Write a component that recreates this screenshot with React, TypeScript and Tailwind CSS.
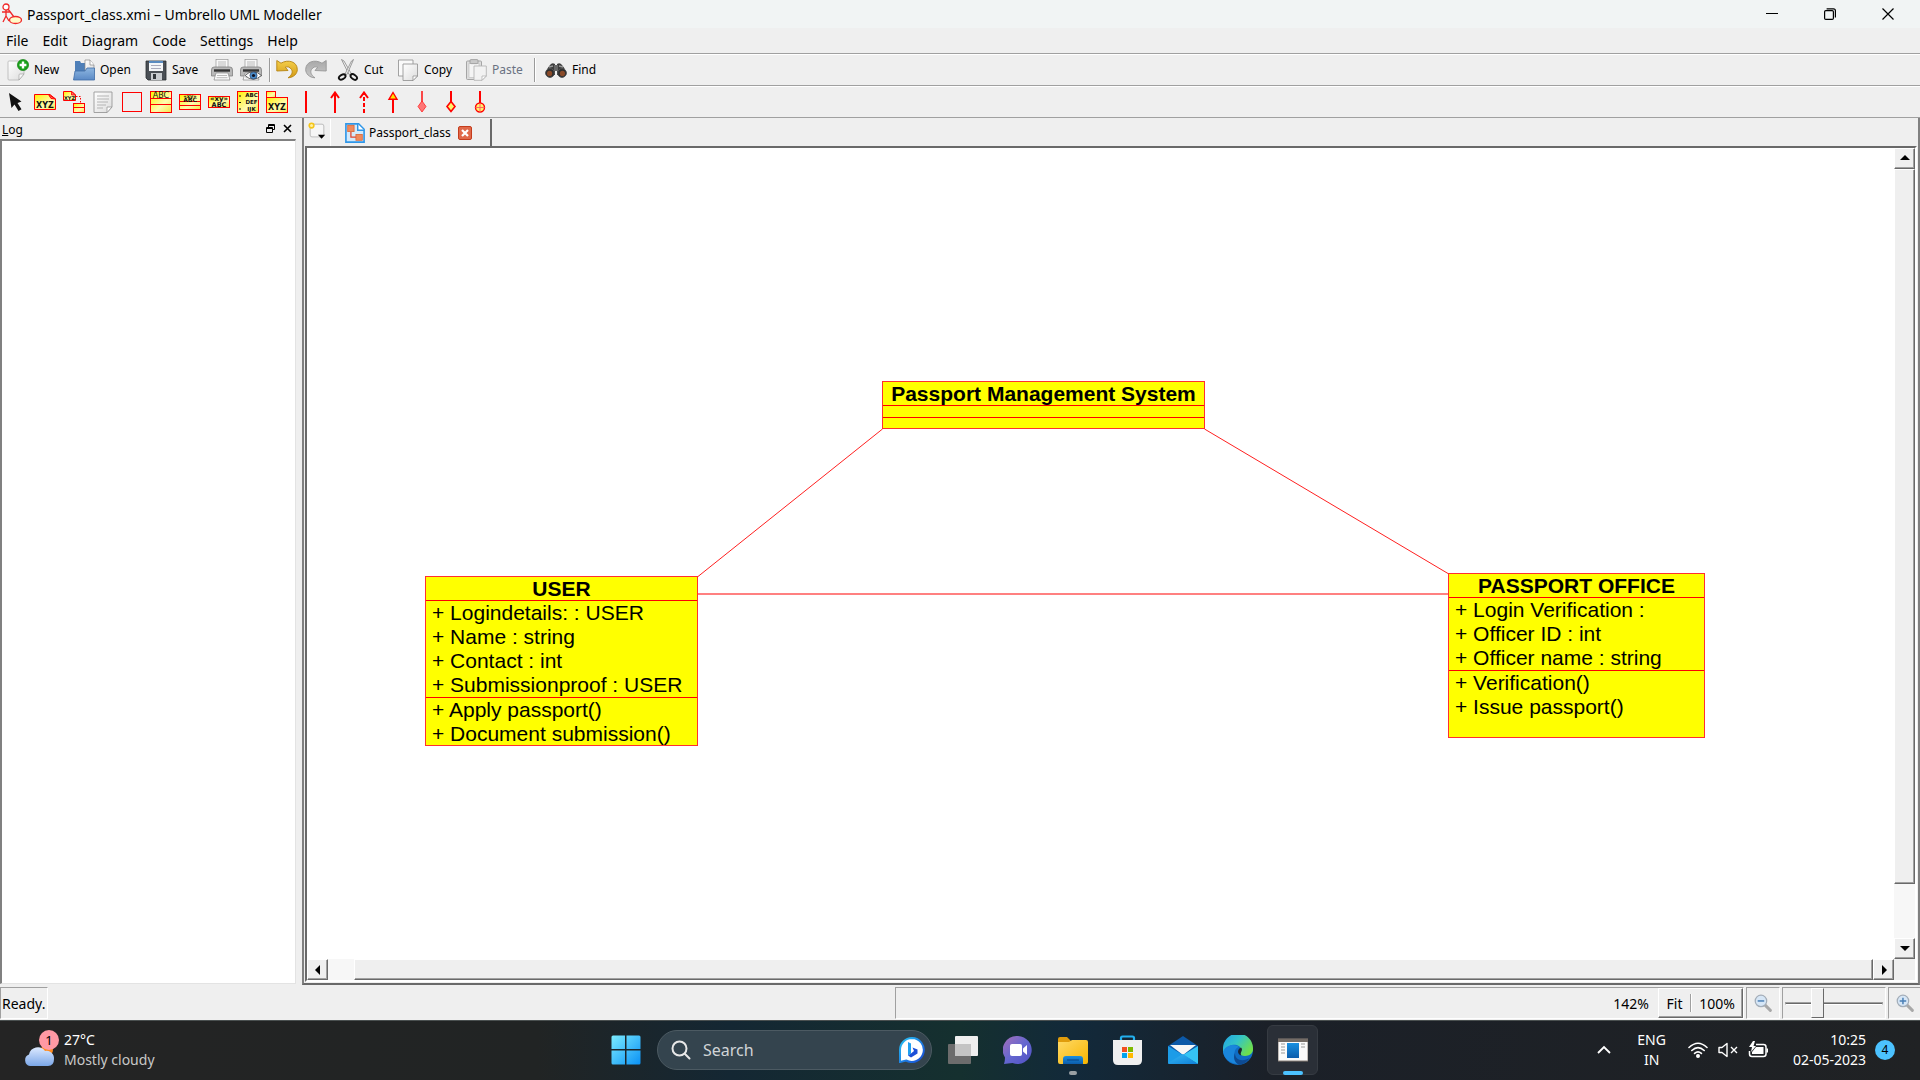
import React from "react";

type Kids = { children?: React.ReactNode };

function Icon({ size = 22, label, children }: Kids & { size?: number; label?: string }) {
  return (
    <svg width={size} height={size} viewBox="0 0 22 22" fill="none" className="shrink-0" aria-label={label} aria-hidden={!label}>
      {children}
    </svg>
  );
}

function Gradients() {
  return (
    <svg width="0" height="0" className="absolute" aria-hidden="true">
      <defs>
        <linearGradient id="paper" x1="0" y1="0" x2="1" y2="1">
          <stop offset="0" stopColor="#ffffff" />
          <stop offset="1" stopColor="#dcdcdc" />
        </linearGradient>
        <linearGradient id="yellow" x1="0" y1="0" x2="1" y2="1">
          <stop offset="0" stopColor="#fff200" />
          <stop offset="0.6" stopColor="#fffbb0" />
          <stop offset="1" stopColor="#f4e84a" />
        </linearGradient>
        <linearGradient id="folderBlue" x1="0" y1="0" x2="0" y2="1">
          <stop offset="0" stopColor="#8db6e0" />
          <stop offset="1" stopColor="#5b8ac6" />
        </linearGradient>
        <linearGradient id="gold" x1="0" y1="0" x2="0" y2="1">
          <stop offset="0" stopColor="#f5cf4a" />
          <stop offset="1" stopColor="#d39a16" />
        </linearGradient>
        <linearGradient id="silver" x1="0" y1="0" x2="0" y2="1">
          <stop offset="0" stopColor="#a8a8a8" />
          <stop offset="1" stopColor="#c8c8c8" />
        </linearGradient>
        <linearGradient id="win" x1="0" y1="0" x2="1" y2="1">
          <stop offset="0" stopColor="#7cecff" />
          <stop offset="1" stopColor="#0a91f5" />
        </linearGradient>
        <linearGradient id="bing" x1="0" y1="0" x2="1" y2="1">
          <stop offset="0" stopColor="#27c4f5" />
          <stop offset="1" stopColor="#1747d4" />
        </linearGradient>
        <linearGradient id="chat" x1="0" y1="0" x2="1" y2="1">
          <stop offset="0" stopColor="#a76fb8" />
          <stop offset="0.5" stopColor="#6567d0" />
          <stop offset="1" stopColor="#5050c4" />
        </linearGradient>
        <linearGradient id="folder" x1="0" y1="0" x2="1" y2="1">
          <stop offset="0" stopColor="#ffd966" />
          <stop offset="1" stopColor="#f7b500" />
        </linearGradient>
        <linearGradient id="blue" x1="0" y1="0" x2="0" y2="1">
          <stop offset="0" stopColor="#1a90e0" />
          <stop offset="1" stopColor="#0c5cab" />
        </linearGradient>
        <linearGradient id="mail" x1="0" y1="0" x2="1" y2="1">
          <stop offset="0" stopColor="#35b9f4" />
          <stop offset="1" stopColor="#0f7fd8" />
        </linearGradient>
        <linearGradient id="edgeTop" x1="0" y1="0" x2="1" y2="0.6">
          <stop offset="0" stopColor="#1f9fe8" />
          <stop offset="0.5" stopColor="#33c4c8" />
          <stop offset="1" stopColor="#6fe04a" />
        </linearGradient>
        <linearGradient id="cloud" x1="0" y1="0" x2="0" y2="1">
          <stop offset="0" stopColor="#dce9ff" />
          <stop offset="1" stopColor="#7ba7e8" />
        </linearGradient>
      </defs>
    </svg>
  );
}

/* ---------- action icons ---------- */

const NewIcon = () => (
  <Icon>
    <path d="M1 3 Q1 2 2 2 H17 V15 L12 21 H2 Q1 21 1 20Z" fill="url(#paper)" stroke="#b5b5b5" strokeWidth="0.8" />
    <path d="M17 15 L12 21 V16 Q12 15 13 15Z" fill="#f8f8f8" stroke="#999" strokeWidth="0.6" />
    <circle cx="16" cy="6" r="5.6" fill="#1aa01a" stroke="#0c7a0c" strokeWidth="0.6" />
    <path d="M16 2.6V9.4M12.6 6H19.4" stroke="#fff" strokeWidth="2.4" />
  </Icon>
);
const OpenIcon = () => (
  <Icon>
    <path d="M2 2 H7 L8 4 H20 V18 H2Z" fill="#4e7fb8" />
    <path d="M12 1 H17 L21 6 V13 H12Z" fill="url(#paper)" stroke="#888" strokeWidth="0.7" />
    <path d="M17 1 V6 H21" fill="#fff" stroke="#888" strokeWidth="0.7" />
    <path d="M0.5 21 L2 12 H12 L14 9 H21.5 V21Z" fill="url(#folderBlue)" stroke="#3f6ca6" strokeWidth="0.8" />
  </Icon>
);
const SaveIcon = () => (
  <Icon>
    <path d="M1 2 H21 V21 H3 L1 19Z" fill="#4a4f55" stroke="#2a2d30" strokeWidth="0.8" />
    <rect x="4" y="2" width="14" height="10" fill="#f4f6f8" />
    <path d="M4 3H18" stroke="#5a8bc0" strokeWidth="2" />
    <path d="M6 6.5H16M6 9.5H16" stroke="#aab" />
    <rect x="6" y="14" width="11" height="7" fill="#c9ccd0" />
    <rect x="8" y="15" width="3" height="5" fill="#33373b" />
  </Icon>
);
const PrintBody = () => (
  <>
    <rect x="5" y="0.5" width="12" height="10" fill="#f8f8f8" stroke="#999" strokeWidth="0.7" />
    <path d="M7 3H15M7 5H15M7 7H15" stroke="#aaa" strokeWidth="0.8" />
    <path d="M3 8 H19 Q21.5 8 21.5 11 V17 H0.5 V11 Q0.5 8 3 8Z" fill="#b8b8b8" stroke="#777" strokeWidth="0.7" />
    <path d="M3 11.5H19" stroke="#333" strokeWidth="2.4" />
    <path d="M5 14 H17 L19 21 H3Z" fill="#fafafa" stroke="#888" strokeWidth="0.7" />
    <path d="M6 16.5H16M5.5 18.7H16.5" stroke="#aaa" strokeWidth="0.8" />
  </>
);
const PrintIcon = () => <Icon><PrintBody /></Icon>;
const PreviewIcon = () => (
  <Icon>
    <PrintBody />
    <path d="M5 16.5 Q13 9 21.5 16.5 Q13 24 5 16.5Z" fill="#fff" stroke="#444" strokeWidth="0.8" />
    <circle cx="13.5" cy="16.5" r="3.6" fill="#4a8cc8" stroke="#235" strokeWidth="0.6" />
    <circle cx="13.5" cy="16.5" r="1.6" fill="#112" />
  </Icon>
);
const UndoShape = ({ fill, edge }: { fill: string; edge: string }) => (
  <path
    d="M0.8 1.5 L5 4.2 C12 0 21.3 2.5 21.3 10.5 C21.3 14.5 18 18.5 12 18.8 C16 16 17 13 15.5 10.5 C14 8 11.5 7.3 9.3 8.2 L12 11.5 L0.8 12Z"
    fill={fill} stroke={edge} strokeWidth="0.9" strokeLinejoin="round"
  />
);
const UndoIcon = () => <Icon><UndoShape fill="url(#gold)" edge="#b58312" /></Icon>;
const RedoIcon = () => (
  <Icon><g transform="translate(22 0) scale(-1 1)"><UndoShape fill="url(#silver)" edge="#969696" /></g></Icon>
);
const CutIcon = () => (
  <Icon>
    <path d="M4.5 0.5 L7 2 L14.5 15 L12 15.5Z" fill="#eee" stroke="#888" strokeWidth="0.8" />
    <path d="M16.5 0.5 L14.5 2 L8 15 L10 15.5Z" fill="#eee" stroke="#888" strokeWidth="0.8" />
    <ellipse cx="5.2" cy="18" rx="3.6" ry="2.2" transform="rotate(-30 5.2 18)" stroke="#111" strokeWidth="1.9" />
    <ellipse cx="16.8" cy="18" rx="3.6" ry="2.2" transform="rotate(35 16.8 18)" stroke="#111" strokeWidth="1.9" />
  </Icon>
);
const CopyIcon = () => (
  <Icon>
    <path d="M1.5 1 H16 V17 H1.5Z" fill="#fafafa" stroke="#999" strokeWidth="0.9" />
    <path d="M6 5 H20.5 V17 L16 21.5 H6Z" fill="url(#paper)" stroke="#999" strokeWidth="0.9" />
    <path d="M20.5 17 H16 V21.5Z" fill="#fff" stroke="#888" strokeWidth="0.7" />
  </Icon>
);
const PasteIcon = () => (
  <Icon>
    <rect x="1.5" y="2" width="15" height="18.5" rx="1" fill="#ddd" stroke="#a5a5a5" />
    <rect x="4" y="4.5" width="10" height="14" fill="#f4f4f4" stroke="#bbb" strokeWidth="0.6" />
    <rect x="5" y="0.6" width="8" height="4" rx="1" fill="#c9c9c9" stroke="#999" strokeWidth="0.8" />
    <path d="M9 7 H21.3 V17 L17 21.3 H9Z" fill="#f2f2f2" stroke="#b5b5b5" strokeWidth="0.9" />
    <path d="M21.3 17 H17 V21.3Z" fill="#fff" stroke="#aaa" strokeWidth="0.7" />
  </Icon>
);
const FindIcon = () => (
  <Icon>
    <path d="M5 6 Q7 3 10 5 V16 H1 Q0 12 5 6Z" fill="#3c3c3c" />
    <path d="M17 6 Q15 3 12 5 V16 H21 Q22 12 17 6Z" fill="#3c3c3c" />
    <rect x="9" y="6" width="4" height="6" fill="#666" />
    <path d="M4 8L8 7M14 7L18 8" stroke="#999" strokeWidth="1.3" />
    <circle cx="5" cy="14" r="4.4" fill="#2d2d2d" stroke="#555" />
    <circle cx="17" cy="14" r="4.4" fill="#2d2d2d" stroke="#555" />
    <circle cx="4.6" cy="14.4" r="2.6" fill="#8a4a28" />
    <circle cx="17.4" cy="14.4" r="2.6" fill="#8a4a28" />
  </Icon>
);

/* ---------- diagram tool icons ---------- */

const Tiny = ({ x, y, s, children }: { x: number; y: number; s: number; children: string }) => (
  <text x={x} y={y} fontSize={s} fontWeight="700" textAnchor="middle" fill="#111" fontFamily="'DejaVu Sans', sans-serif">
    {children}
  </text>
);

const tools: { name: string; icon: React.ReactNode }[] = [
  {
    name: "Select",
    icon: <path d="M4 2 L6.5 17 L9.5 13.5 L13.5 20 L16.5 18.3 L12.5 12 L16.5 10.5Z" fill="#111" />,
  },
  {
    name: "Object",
    icon: (
      <>
        <path d="M0.5 3.5 H16 L21.5 8 V18.5 H0.5Z" fill="url(#yellow)" stroke="#f00" />
        <path d="M14.5 3.5 L17 7.5 L21.5 8Z" fill="#f66" stroke="#f00" />
        <Tiny x={11} y={17} s={8}>XYZ</Tiny>
      </>
    ),
  },
  {
    name: "Message",
    icon: (
      <>
        <path d="M0.5 0.5 H9 L12.5 4 V9.5 H0.5Z" fill="url(#yellow)" stroke="#f00" />
        <path d="M8.5 0.5V4H12.5Z" fill="#f66" stroke="#f00" strokeWidth="0.8" />
        <Tiny x={6.5} y={8.5} s={5}>XYZ</Tiny>
        <path d="M13 5.5H17.5V12" stroke="#f00" strokeDasharray="1.5 1.5" />
        <rect x="10.5" y="12.5" width="11" height="9" fill="url(#yellow)" stroke="#f00" />
        <path d="M10.5 16.5H21.5" stroke="#f00" />
      </>
    ),
  },
  {
    name: "Note",
    icon: (
      <>
        <path d="M2 1 H20 V16 L15 21.5 H2Z" fill="url(#paper)" stroke="#999" strokeWidth="0.9" />
        <path d="M5 5H17M5 8H17M5 11H16M5 14H14M5 17H11" stroke="#b4b4b4" />
        <path d="M20 16 H15 V21.5Z" fill="#fff" stroke="#999" strokeWidth="0.8" />
      </>
    ),
  },
  { name: "Box", icon: <rect x="1.5" y="1.5" width="19" height="19" stroke="#f00" /> },
  {
    name: "Class",
    icon: (
      <>
        <rect x="0.5" y="0.5" width="21" height="21" fill="url(#yellow)" stroke="#f00" />
        <path d="M1 7.5H21M1 13.5H21" stroke="#f00" />
        <text x="11" y="6.7" fontSize="8" textAnchor="middle" fill="#111" fontFamily="'DejaVu Sans', sans-serif">ABC</text>
      </>
    ),
  },
  {
    name: "Interface",
    icon: (
      <>
        <rect x="0.5" y="3.5" width="21" height="15" fill="url(#yellow)" stroke="#f00" />
        <path d="M1 10.5H21M1 14.5H21" stroke="#f00" />
        <Tiny x={11} y={7} s={5}>«xy»</Tiny>
        <Tiny x={11} y={10.5} s={6}>ABC</Tiny>
      </>
    ),
  },
  {
    name: "Datatype",
    icon: (
      <>
        <rect x="0.5" y="5.5" width="21" height="11" fill="url(#yellow)" stroke="#f00" />
        <Tiny x={11} y={10} s={7}>«xy»</Tiny>
        <Tiny x={11} y={15.5} s={6.5}>ABC</Tiny>
      </>
    ),
  },
  {
    name: "Enum",
    icon: (
      <>
        <rect x="0.5" y="0.5" width="21" height="21" fill="url(#yellow)" stroke="#f00" />
        <Tiny x={14.5} y={6} s={5.5}>ABC</Tiny>
        <Tiny x={14.5} y={13} s={5.5}>DEF</Tiny>
        <Tiny x={14.5} y={19.5} s={5.5}>IJK</Tiny>
        <path d="M2 5H4M2 11.5H4M2 18H4" stroke="#111" />
      </>
    ),
  },
  {
    name: "Package",
    icon: (
      <>
        <rect x="0.5" y="0.5" width="9" height="6" fill="url(#yellow)" stroke="#f00" />
        <rect x="0.5" y="6.5" width="21" height="15" fill="url(#yellow)" stroke="#f00" />
        <Tiny x={11} y={18.5} s={8}>XYZ</Tiny>
      </>
    ),
  },
  { name: "Association", icon: <path d="M11 0V22" stroke="#f00" strokeWidth="2" /> },
  { name: "Directional association", icon: <path d="M11 22V2M7 7L11 1.5L15 7" stroke="#f00" strokeWidth="2" /> },
  {
    name: "Dependency",
    icon: (
      <>
        <path d="M11 22V2" stroke="#f00" strokeWidth="2" strokeDasharray="4 2" />
        <path d="M7 7L11 1.5L15 7" stroke="#f00" strokeWidth="2" />
      </>
    ),
  },
  {
    name: "Generalization",
    icon: (
      <>
        <path d="M11 22V8" stroke="#f00" strokeWidth="2" />
        <path d="M11 1.5L15 8.2H7Z" fill="#ffe600" stroke="#f00" strokeWidth="1.4" />
      </>
    ),
  },
  {
    name: "Composition",
    icon: (
      <>
        <path d="M11 0V11" stroke="#f00" strokeWidth="1.4" />
        <path d="M11 10L15 15.5L11 21L7 15.5Z" fill="#f77" stroke="#f22" strokeWidth="0.8" />
      </>
    ),
  },
  {
    name: "Aggregation",
    icon: (
      <>
        <path d="M11 0V11" stroke="#f00" strokeWidth="2" />
        <path d="M11 10.5L15 15.5L11 20.5L7 15.5Z" fill="#fff36b" stroke="#f00" strokeWidth="1.6" />
      </>
    ),
  },
  {
    name: "Containment",
    icon: (
      <>
        <path d="M11 0V12" stroke="#f00" strokeWidth="2" />
        <circle cx="11" cy="16.5" r="4.5" fill="#fff36b" stroke="#f00" strokeWidth="1.4" />
        <path d="M11 12V21M6.5 16.5H15.5" stroke="#f66" />
      </>
    ),
  },
];

/* ---------- shared controls ---------- */

function ToolButton({ icon, label, width, disabled }: { icon: React.ReactNode; label: string; width: string; disabled?: boolean }) {
  return (
    <button disabled={disabled} className={`flex h-full items-center gap-[5px] text-[12px] leading-4 ${width} ${disabled ? "text-gray-500" : "text-black"}`}>
      {icon}
      {label}
    </button>
  );
}

function ToolSeparator() {
  return <div className="h-6 w-[2px] border-l border-[#9a9a9a] bg-white" />;
}

const raised = "border border-t-white border-l-white border-r-[#696969] border-b-[#696969] bg-[#efefef] shadow-[inset_-1px_-1px_0_#a0a0a0]";
const sunken = "border border-t-[#a0a0a0] border-l-[#a0a0a0] border-r-white border-b-white";

function ScrollButton({ dir }: { dir: "up" | "down" | "left" | "right" }) {
  const paths = { up: "M5 1L10 6H0Z", down: "M0 2H10L5 7Z", left: "M7 0V10L2 5Z", right: "M3 0V10L8 5Z" };
  return (
    <button aria-label={`Scroll ${dir}`} className={`flex size-[21px] shrink-0 items-center justify-center ${raised}`}>
      <svg width="10" height="10" viewBox="0 0 10 10"><path d={paths[dir]} fill="#000" /></svg>
    </button>
  );
}

/* ---------- diagram ---------- */

type UmlClass = { name: string; place: string; attributes: string[]; operations: string[] };

const classes: UmlClass[] = [
  {
    name: "USER",
    place: "left-[118px] top-[428px] w-[273px] h-[170px]",
    attributes: ["+ Logindetails: : USER", "+ Name : string", "+ Contact : int", "+ Submissionproof : USER"],
    operations: ["+ Apply passport()", "+ Document submission()"],
  },
  {
    name: "PASSPORT OFFICE",
    place: "left-[1141px] top-[425px] w-[257px] h-[165px]",
    attributes: ["+ Login Verification :", "+ Officer ID : int", "+ Officer name : string"],
    operations: ["+ Verification()", "+ Issue passport()"],
  },
  { name: "Passport Management System", place: "left-[575px] top-[233px] w-[323px] h-[48px]", attributes: [], operations: [] },
];

function Compartment({ rows }: { rows: string[] }) {
  return (
    <ul className="min-h-[12px] border-t border-[#f00] pl-[6px]">
      {rows.map((r) => (
        <li key={r} className="whitespace-nowrap">{r}</li>
      ))}
    </ul>
  );
}

function UmlBox({ c }: { c: UmlClass }) {
  return (
    <div className={`absolute border border-[#ff3030] bg-[#ffff00] font-['Liberation_Sans',sans-serif] text-[21px] leading-6 text-black ${c.place}`}>
      <h2 className="text-center leading-[23px] font-bold whitespace-nowrap">{c.name}</h2>
      <Compartment rows={c.attributes} />
      <Compartment rows={c.operations} />
    </div>
  );
}

function Diagram() {
  return (
    <div className="relative min-w-0 flex-1 overflow-hidden bg-white">
      <svg className="absolute inset-0 size-full" fill="none" stroke="#ff2020" aria-hidden="true">
        <path d="M391 428.500L575.500 281M897.500 281L1141 425.500" />
        <path d="M391 446H1141" stroke="#ff8080" strokeWidth="2" />
      </svg>
      {classes.map((c) => <UmlBox key={c.name} c={c} />)}
    </div>
  );
}

/* ---------- panels ---------- */

function TitleBar() {
  return (
    <header className="flex h-7 items-center bg-[#f1f4f4] pr-[3px] pl-[2px]">
      <Icon>
        <g stroke="#f02828" strokeWidth="1.3">
          <circle cx="4" cy="4" r="3" fill="#fff" />
          <path d="M4 7V13M0 9H8M4 13L1 19M4 13L7 18M6 6L12 14" />
          <ellipse cx="13.500" cy="17" rx="6" ry="3.500" fill="#fffbc8" />
        </g>
      </Icon>
      <h1 className="ml-[3px] flex-1 pt-px text-[14px] leading-5">Passport_class.xmi – Umbrello UML Modeller</h1>
      <button aria-label="Minimize" className="flex h-7 w-[58px] items-center justify-center">
        <svg width="12" height="12" viewBox="0 0 12 12"><path d="M0 5.500H12" stroke="#000" /></svg>
      </button>
      <button aria-label="Restore" className="flex h-7 w-[58px] items-center justify-center">
        <svg width="12" height="12" viewBox="0 0 12 12" fill="none" stroke="#000" strokeWidth="1.200">
          <rect x="0.600" y="2.600" width="8.800" height="8.800" rx="1.200" />
          <path d="M2.600 0.800H9.500Q11.400 0.800 11.400 2.700V9.400" />
        </svg>
      </button>
      <button aria-label="Close" className="flex h-7 w-[58px] items-center justify-center">
        <svg width="12" height="12" viewBox="0 0 12 12"><path d="M0.500 0.500L11.500 11.500M11.500 0.500L0.500 11.500" stroke="#000" strokeWidth="1.200" /></svg>
      </button>
    </header>
  );
}

function MenuBar() {
  return (
    <nav className="flex h-[26px] items-center gap-[14px] border-b border-[#a0a0a0] pt-px pl-[6px] text-[14px] leading-5">
      {["File", "Edit", "Diagram", "Code", "Settings", "Help"].map((m) => <button key={m}>{m}</button>)}
    </nav>
  );
}

function ActionBar() {
  return (
    <div role="toolbar" aria-label="Main" className="flex h-8 items-center border-t border-t-white border-b border-b-[#a0a0a0] pl-[7px]">
      <ToolButton icon={<NewIcon />} label="New" width="w-[66px]" />
      <ToolButton icon={<OpenIcon />} label="Open" width="w-[72px]" />
      <ToolButton icon={<SaveIcon />} label="Save" width="w-[66px]" />
      <button aria-label="Print" className="w-[29px]"><PrintIcon /></button>
      <button aria-label="Print preview" className="w-[29px]"><PreviewIcon /></button>
      <ToolSeparator />
      <button aria-label="Undo" className="ml-[5px] w-[29px]"><UndoIcon /></button>
      <button aria-label="Redo" className="w-[32px]"><RedoIcon /></button>
      <ToolButton icon={<CutIcon />} label="Cut" width="w-[60px]" />
      <ToolButton icon={<CopyIcon />} label="Copy" width="w-[68px]" />
      <ToolButton icon={<PasteIcon />} label="Paste" width="w-[69px]" disabled />
      <ToolSeparator />
      <ToolButton icon={<FindIcon />} label="Find" width="ml-[9px] w-[60px]" />
    </div>
  );
}

function DiagramToolBar() {
  return (
    <div role="toolbar" aria-label="Diagram tools" className="flex h-8 items-center border-t border-t-white border-b border-b-[#a0a0a0] pl-px">
      {tools.map((t) => (
        <button key={t.name} aria-label={t.name} className="flex w-[29px] justify-center">
          <Icon>{t.icon}</Icon>
        </button>
      ))}
    </div>
  );
}

function LogPanel() {
  return (
    <aside className="flex w-[296px] shrink-0 flex-col pb-[1px]">
      <div className="flex h-[21px] items-center pr-1 pl-[2px] text-[12px]">
        <h2 className="flex-1 pt-[2px]"><span className="underline">L</span>og</h2>
        <button aria-label="Float" className="mr-2">
          <svg width="9" height="9" viewBox="0 0 9 9" fill="none" stroke="#000">
            <path d="M2.500 3V0.500H8.500V5.500H6M2.500 1.500H8.500" />
            <path d="M0.500 3.500H6.500V8.500H0.500ZM0.500 4.500H6.500" />
          </svg>
        </button>
        <button aria-label="Close log">
          <svg width="9" height="9" viewBox="0 0 9 9"><path d="M1 1L8 8M8 1L1 8" stroke="#000" strokeWidth="1.600" /></svg>
        </button>
      </div>
      <div className="flex-1 border border-t-2 border-l-2 border-t-[#808080] border-l-[#808080] border-r-[#e3e3e3] border-b-[#e3e3e3] bg-white" />
    </aside>
  );
}

function DocumentPanel() {
  return (
    <main className="ml-[6px] flex min-w-0 flex-1 flex-col border-2 border-t-0 border-[#808080] border-b-[#696969]">
      <div className="flex h-[28px] items-start pt-px pl-[3px]">
        <button aria-label="New diagram" className="pt-[2px]">
          <Icon size={20}>
            <rect x="3.500" y="3.500" width="15" height="14" rx="2" fill="#f6f6f6" stroke="#b8b8b8" />
            <circle cx="5" cy="5" r="3.400" fill="#f5c518" />
            <circle cx="5" cy="5" r="1.700" fill="#fff0a0" />
            <path d="M12 15H20L16 19.500Z" fill="#000" />
          </Icon>
        </button>
        <div role="tab" className="ml-[3px] flex h-[27px] items-center border-r-2 border-l border-l-white border-r-[#696969] pr-[18px] pl-[14px] text-[12px]">
          <Icon size={20}>
            <path d="M1 1H15L21 7V21H1Z" fill="#d4e9fa" stroke="#2f96e8" strokeWidth="1.800" />
            <path d="M14 1V8H21" fill="#fff" stroke="#2f96e8" strokeWidth="1.600" />
            <rect x="3" y="2.500" width="7" height="7" fill="#f08a5c" stroke="#d9602e" strokeWidth="0.800" />
            <rect x="12" y="12.500" width="7" height="6.500" fill="#f08a5c" stroke="#d9602e" strokeWidth="0.800" />
            <path d="M6.500 10V15.500H12" stroke="#e0442e" strokeWidth="1.400" />
          </Icon>
          <span className="mr-[7px] ml-1">Passport_class</span>
          <button aria-label="Close tab" className="flex size-[14px] items-center justify-center rounded-xs border border-[#c43c1c] bg-[#e0694a]">
            <svg width="8" height="8" viewBox="0 0 8 8"><path d="M1 1L7 7M7 1L1 7" stroke="#fff" strokeWidth="2.200" /></svg>
          </button>
        </div>
      </div>
      <div className="mr-[1px] mb-px ml-px flex min-h-0 flex-1 flex-col border-2 border-t-[#696969] border-l-[#696969] border-r-white border-b-white">
        <div className="flex min-h-0 flex-1">
          <Diagram />
          <div className="flex w-[21px] shrink-0 flex-col bg-[#f7f7f7]">
            <ScrollButton dir="up" />
            <div className={`flex-[93] ${raised}`} />
            <div className="flex-[7]" />
            <ScrollButton dir="down" />
          </div>
        </div>
        <div className="flex h-[21px] shrink-0 bg-[#f7f7f7]">
          <ScrollButton dir="left" />
          <div className="w-[26px]" />
          <div className={`flex-1 ${raised}`} />
          <ScrollButton dir="right" />
          <div className="w-[21px] bg-[#efefef]" />
        </div>
      </div>
    </main>
  );
}

function Magnifier({ plus }: { plus?: boolean }) {
  return (
    <Icon size={18}>
      <path d="M13 13L20 20" stroke="#a8a8a8" strokeWidth="3.600" strokeLinecap="round" />
      <circle cx="8.500" cy="8.500" r="7" fill="#d6e6f6" stroke="#a3adb8" strokeWidth="1.500" />
      <path d={plus ? "M4.500 8.500H12.500M8.500 4.500V12.500" : "M4.500 8.500H12.500"} stroke="#4a7fb5" strokeWidth="1.800" />
    </Icon>
  );
}

function StatusBar() {
  return (
    <footer className="flex h-[35px] items-stretch pt-[2px] pb-px text-[14px] leading-5">
      <div className={`flex w-[48px] items-center pt-px pl-px ${sunken}`}>Ready.</div>
      <div className="flex-[847]" />
      <div className={`flex flex-[847] items-center justify-end py-0 ${sunken} border-r-transparent`}>
        <span className="mr-[9px] pt-px">142%</span>
        <div className={`flex h-[30px] items-center ${raised}`}>
          <button className="w-[31px] pt-px">Fit</button>
          <div className="h-[18px] w-[2px] border-l border-[#a0a0a0] bg-white" />
          <button className="w-[50px] pt-px">100%</button>
        </div>
      </div>
      <button aria-label="Zoom out" className={`ml-[2px] flex w-[34px] items-center justify-center ${sunken}`}><Magnifier /></button>
      <div className={`ml-[2px] flex w-[104px] items-center px-[2px] ${sunken}`}>
        <input
          type="range"
          aria-label="Zoom"
          defaultValue={30}
          className="h-[30px] w-full appearance-none bg-transparent [&::-webkit-slider-runnable-track]:h-[3px] [&::-webkit-slider-runnable-track]:border [&::-webkit-slider-runnable-track]:border-[#a0a0a0] [&::-webkit-slider-runnable-track]:border-b-white [&::-webkit-slider-runnable-track]:bg-[#696969] [&::-webkit-slider-thumb]:mt-[-15px] [&::-webkit-slider-thumb]:h-[30px] [&::-webkit-slider-thumb]:w-[13px] [&::-webkit-slider-thumb]:appearance-none [&::-webkit-slider-thumb]:border [&::-webkit-slider-thumb]:border-white [&::-webkit-slider-thumb]:border-r-[#696969] [&::-webkit-slider-thumb]:border-b-[#696969] [&::-webkit-slider-thumb]:bg-[#efefef]"
        />
      </div>
      <button aria-label="Zoom in" className={`ml-[2px] flex w-[32px] items-center justify-center ${sunken} border-r-0`}><Magnifier plus /></button>
    </footer>
  );
}

/* ---------- taskbar ---------- */

const apps: { name: string; state?: "open" | "active"; icon: React.ReactNode }[] = [
  {
    name: "Task view",
    icon: (
      <>
        <rect x="0" y="9" width="23" height="20" rx="1" fill="#6c6c6c" />
        <rect x="7" y="1" width="23" height="20" rx="1" fill="#efefef" />
        <rect x="7" y="9" width="16" height="12" fill="#c4c4c4" />
      </>
    ),
  },
  {
    name: "Chat",
    icon: (
      <>
        <path d="M15 1A14 14 0 1 1 9.500 28L1 29Q2 26 2 22.500A14 14 0 0 1 15 1Z" fill="url(#chat)" />
        <rect x="7" y="9" width="12" height="12" rx="2" fill="#fff" />
        <path d="M20 13.500L24 10V20L20 16.500Z" fill="#fff" />
      </>
    ),
  },
  {
    name: "File Explorer",
    state: "open",
    icon: (
      <>
        <path d="M0 4Q0 2 2 2H9L13 6V10H0Z" fill="#e09c0c" />
        <path d="M0 7H11L14 5H28Q30 5 30 7V27Q30 29 28 29H2Q0 29 0 27Z" fill="url(#folder)" />
        <path d="M5 29V24Q5 21 8 21H22Q25 21 25 24V29Z" fill="url(#blue)" />
        <path d="M9 25H21" stroke="#0a4a90" strokeWidth="1.200" />
      </>
    ),
  },
  {
    name: "Store",
    icon: (
      <>
        <path d="M8 7V3Q8 1.500 9.500 1.500H19.500Q21 1.500 21 3V7" fill="none" stroke="#22b0ee" strokeWidth="2.200" />
        <path d="M0 5H29V25Q29 30 24 30H5Q0 30 0 25Z" fill="#f0f0f0" />
        <rect x="9" y="12" width="5" height="5" fill="#f25022" />
        <rect x="15" y="12" width="5" height="5" fill="#7fba00" />
        <rect x="9" y="18" width="5" height="5" fill="#00a4ef" />
        <rect x="15" y="18" width="5" height="5" fill="#ffb900" />
      </>
    ),
  },
  {
    name: "Mail",
    icon: (
      <>
        <path d="M0 11L15 1L30 11V20H0Z" fill="#0c59a8" />
        <path d="M2 10H28L15 20Z" fill="#f6f6f6" />
        <path d="M0 11L30 29H1.500Q0 29 0 27.500Z" fill="#1c9ce8" />
        <path d="M30 11L15 20L30 29Z" fill="#35c4f5" />
        <path d="M0 28L15 19L30 29H1Z" fill="url(#mail)" />
      </>
    ),
  },
  {
    name: "Edge",
    icon: (
      <>
        <circle cx="15" cy="15" r="15" fill="#0f6cc4" />
        <path d="M0 14A15 15 0 0 1 30 13C30.500 18 27 21 22 21C18 21 16 19.500 17.500 17.500C20 12 14 9 9 10C5 11 2 13 0 18Z" fill="url(#edgeTop)" />
        <path d="M0 17C2 10 12 8 16 12C11 13 9 22 16 29A15 15 0 0 1 0 17Z" fill="#1a86dc" />
        <path d="M12 18C12 26 21 27 27 22.500A15 15 0 0 1 16 30C11 27 10 22 12 18Z" fill="#0d4a92" />
        <path d="M18 12.500C21 15 16 18 18.500 20.500C14 19.500 14 14 18 12.500Z" fill="#1c2430" />
      </>
    ),
  },
  {
    name: "Umbrello",
    state: "active",
    icon: (
      <>
        <rect x="0" y="4" width="30" height="22" fill="#fafafa" stroke="#8a8078" />
        <rect x="0" y="4" width="30" height="3" fill="#746c66" />
        <rect x="9" y="8" width="12" height="15" fill="url(#blue)" />
        <path d="M3 9H7M3 12H7M3 15H7M3 18H7M23 9H27M23 12H27" stroke="#999" />
      </>
    ),
  },
];

function Taskbar() {
  return (
    <div className="flex h-[60px] shrink-0 items-center border-t border-[#4a5050] bg-[linear-gradient(90deg,#242424_0%,#212424_28%,#142733_38%,#15302f_50%,#12293a_56%,#1b2028_66%,#202224_100%)] pb-[2px] text-white">
      <div className="flex flex-1 items-center pl-[23px]">
        <button className="flex items-center gap-[5px] text-left text-[14px] leading-5" aria-label="27°C Mostly cloudy">
          <span className="relative block size-[36px]">
            <svg width="36" height="36" viewBox="0 0 36 36">
              <circle cx="24" cy="18" r="6" fill="#ff8a1e" />
              <path d="M7 34A6 6 0 0 1 6 22.500A9 9 0 0 1 22 19A7.500 7.500 0 0 1 31 27Q31 34 25 34Z" fill="url(#cloud)" />
            </svg>
            <span className="absolute -top-[2px] left-4 flex size-5 items-center justify-center rounded-full bg-[#ff99a4] text-[13px] text-black">1</span>
          </span>
          <span>
            <span className="block">27°C</span>
            <span className="block text-[#c8c8c8]">Mostly cloudy</span>
          </span>
        </button>
      </div>

      <div className="flex items-center">
        <button aria-label="Start" className="flex w-[55px] justify-center">
          <svg width="30" height="30" viewBox="0 0 30 30" fill="url(#win)">
            <path d="M2 0.500H14V14H0.500V2Q0.500 0.500 2 0.500ZM15.500 0.500H28Q29.500 0.500 29.500 2V14H15.500ZM0.500 15.500H14V29.500H2Q0.500 29.500 0.500 28ZM15.500 15.500H29.500V28Q29.500 29.500 28 29.500H15.500Z" />
          </svg>
        </button>
        <label className="ml-1 flex h-10 w-[275px] items-center rounded-full border border-[#4c5a62] bg-[#34444e] pr-[6px] pl-[13px]">
          <svg width="20" height="20" viewBox="0 0 20 20" fill="none" stroke="#e8e8e8" strokeWidth="2" strokeLinecap="round">
            <circle cx="8.500" cy="8.500" r="7" /><path d="M13.800 13.800L18.500 18.500" />
          </svg>
          <input type="text" aria-label="Search" placeholder="Search" className="ml-3 min-w-0 flex-1 bg-transparent text-[16px] leading-5 text-white outline-none placeholder:text-[#d0d4d6]" />
          <svg width="26" height="26" viewBox="0 0 26 26">
            <path d="M13 1A12 12 0 1 1 7 23.500L1 25Q1 19 1 13A12 12 0 0 1 13 1Z" fill="#fff" stroke="url(#bing)" strokeWidth="2" />
            <path d="M9 5L12 6.500V16.500L9 18.500Z" fill="#1f9ff0" />
            <path d="M9 18.500L12 20.500L18.500 16.500V12.500L13.500 10.500L15 14L12 16.500Z" fill="#1c4fd8" />
          </svg>
        </label>
        <div className="ml-[3px] flex">
          {apps.map((a) => (
            <button key={a.name} aria-label={a.name} className="relative flex h-[58px] w-[55px] items-center justify-center">
              {a.state === "active" && <span className="absolute inset-x-[2px] inset-y-1 rounded-md border border-[#363b42] bg-[#2a2f37]" />}
              <svg className="relative" width="30" height="30" viewBox="0 0 30 30">{a.icon}</svg>
              {a.state === "open" && <span className="absolute bottom-1 h-1 w-2 rounded-full bg-[#9aa0a4]" />}
              {a.state === "active" && <span className="absolute bottom-1 h-1 w-5 rounded-full bg-[#4cc2ff]" />}
            </button>
          ))}
        </div>
      </div>

      <div className="flex flex-1 items-center justify-end pr-[25px] text-[14px] leading-5">
        <button aria-label="Hidden icons" className="mr-[26px]">
          <svg width="14" height="10" viewBox="0 0 14 10" fill="none"><path d="M1 8L7 2L13 8" stroke="#fff" strokeWidth="1.800" /></svg>
        </button>
        <button className="mr-[22px] text-center leading-5">ENG<br />IN</button>
        <button aria-label="Network, sound and battery" className="flex items-center gap-[10px]">
          <svg width="20" height="18" viewBox="0 0 20 18" fill="none" stroke="#fff" strokeWidth="1.600" strokeLinecap="round">
            <path d="M1 6.500Q10 -2 19 6.500M3.800 9.500Q10 3.800 16.200 9.500M6.600 12.400Q10 9.400 13.400 12.400" />
            <circle cx="10" cy="15" r="1.200" fill="#fff" />
          </svg>
          <svg width="20" height="18" viewBox="0 0 20 18" fill="none" stroke="#fff" strokeWidth="1.400" strokeLinejoin="round">
            <path d="M1 6.500H4L9 2.500V15.500L4 11.500H1Z" /><path d="M13 6L19 12M19 6L13 12" />
          </svg>
          <svg width="21" height="18" viewBox="0 0 21 18" fill="none" stroke="#fff" strokeWidth="1.500">
            <path d="M8 3.500H15.500Q18 3.500 18 6V13Q18 15.500 15.500 15.500H4Q1.500 15.500 1.500 13V10" />
            <path d="M8 6H15.500V13H4V11Z" fill="#fff" stroke="none" />
            <path d="M18.500 7.500H20V11.500H18.500Z" fill="#fff" stroke="none" />
            <path d="M5 0L1 6H4L3 11L8 5H5.500L7 0Z" fill="#fff" stroke="none" />
          </svg>
        </button>
        <button className="ml-6 text-right">10:25<br />02-05-2023</button>
        <button aria-label="4 notifications" className="ml-[9px] flex size-5 items-center justify-center rounded-full bg-[#4cc2ff] text-[12px] text-black">4</button>
      </div>
    </div>
  );
}

export default function App() {
  return (
    <div className="flex h-screen flex-col overflow-hidden bg-[#efefef] font-['Noto_Sans','Open_Sans',sans-serif] text-black">
      <Gradients />
      <TitleBar />
      <MenuBar />
      <ActionBar />
      <DiagramToolBar />
      <div className="flex min-h-0 flex-1">
        <LogPanel />
        <DocumentPanel />
      </div>
      <StatusBar />
      <Taskbar />
    </div>
  );
}
